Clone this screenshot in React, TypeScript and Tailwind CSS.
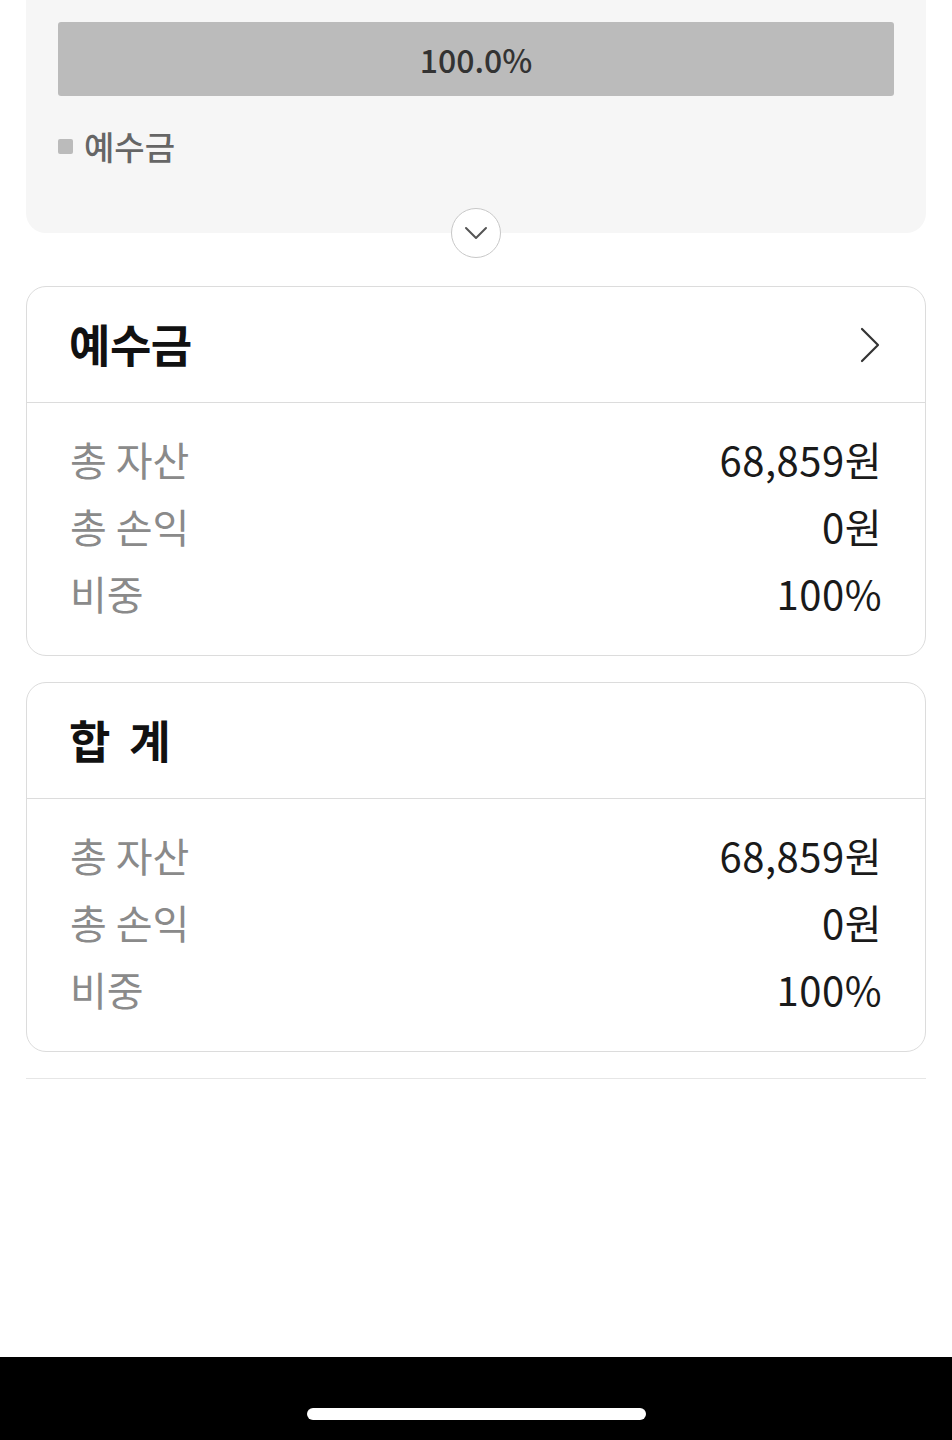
type Row = { label: string; value: string }

const rows: Row[] = [
  { label: '총 자산', value: '68,859원' },
  { label: '총 손익', value: '0원' },
  { label: '비중', value: '100%' },
]

const font = { fontFamily: '"Noto Sans CJK KR", "Noto Sans", sans-serif' }

const AssetCard = ({ title, arrow }: { title: string; arrow?: boolean }) => (
  <div className="rounded-[20px] border border-[#dcdcdc] bg-white">
    <div className="flex h-[116px] items-center justify-between border-b border-[#dcdcdc] pl-[42px] pr-[44px]">
      <span className="-mt-[3px] text-[45px] font-bold leading-none tracking-[-0.5px] whitespace-pre text-[#111]">{title}</span>
      {arrow && (
        <svg width="22" height="36" viewBox="0 0 22 36" fill="none" className="text-[#333]">
          <path d="M3 2 L19 18 L3 34" stroke="currentColor" strokeWidth="2.2" strokeLinecap="round" strokeLinejoin="round" />
        </svg>
      )}
    </div>
    <div className="flex flex-col px-[43px] pt-[22px] pb-[29px]">
      {rows.map((row) => (
        <div key={row.label} className="flex h-[67px] items-center justify-between">
          <span className="text-[40px] leading-none text-[#8a8a8a]">{row.label}</span>
          <span className="text-[40px] leading-none tracking-[0.5px] text-[#1a1a1a]">{row.value}</span>
        </div>
      ))}
    </div>
  </div>
)

export default function App() {
  return (
    <div className="flex h-[1440px] w-[952px] flex-col bg-white" style={font}>
      <div className="flex-1 px-[26px]">
        {/* portfolio summary panel */}
        <div className="relative rounded-b-[20px] bg-[#f6f6f6] px-[32px] pt-[22px] pb-[70px]">
          <div className="flex h-[74px] items-center justify-center rounded-[3px] bg-[#bbbbbb]">
            <span className="text-[32px] font-medium text-[#333]">100.0%</span>
          </div>
          <div className="mt-[34px] flex items-center gap-[11px]">
            <span className="size-[15px] rounded-[2px] bg-[#bbbbbb]" />
            <span className="text-[33px] leading-none font-medium text-[#666]">예수금</span>
          </div>
          <button className="absolute bottom-[-25px] left-1/2 flex size-[50px] -translate-x-1/2 items-center justify-center rounded-full border border-[#c8c8c8] bg-white">
            <svg width="24" height="14" viewBox="0 0 24 14" fill="none" className="text-[#555]">
              <path d="M2 2 L12 12 L22 2" stroke="currentColor" strokeWidth="2" strokeLinecap="round" strokeLinejoin="round" />
            </svg>
          </button>
        </div>

        <div className="mt-[53px] flex flex-col gap-[26px]">
          <AssetCard title="예수금" arrow />
          <AssetCard title="합  계" />
        </div>

        <div className="mt-[26px] h-px bg-[#e6e6e6]" />
      </div>

      {/* system navigation bar */}
      <div className="flex h-[83px] items-start justify-center bg-black pt-[51px]">
        <div className="h-[12px] w-[339px] rounded-full bg-white" />
      </div>
    </div>
  )
}
